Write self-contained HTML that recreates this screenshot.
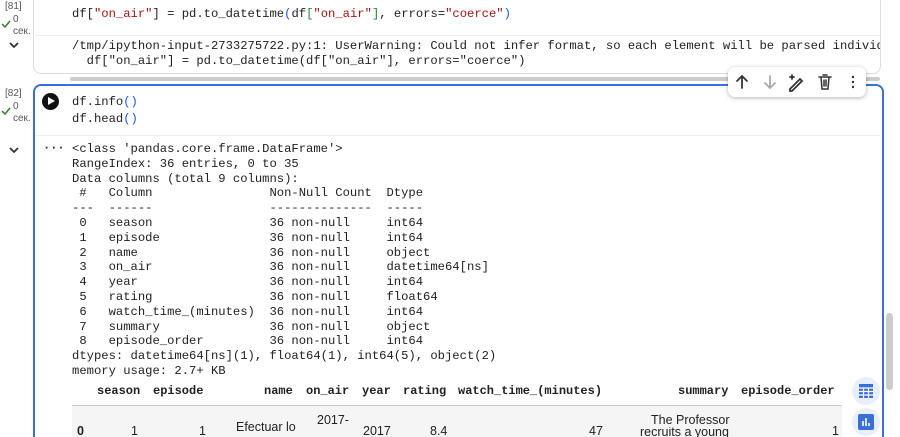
<!DOCTYPE html>
<html><head><style>
html,body{margin:0;width:900px;height:437px;overflow:hidden}
body{background:#fff;font-family:"Liberation Mono",monospace;position:relative;color:#212121}
.a{position:absolute}
.mono{font-family:"Liberation Mono",monospace;font-size:12.2px;white-space:pre}
.sm{font-family:"Liberation Sans",sans-serif;font-size:10px;color:#555}
.s{color:#a31515}.b{color:#1a56db}.g{color:#22863a}
.h{position:absolute;top:384px;font-family:"Liberation Mono",monospace;font-weight:bold;font-size:12px;white-space:pre}
.c{position:absolute;font-family:"Liberation Sans",sans-serif;font-size:12.5px;white-space:nowrap;color:#222}
</style></head><body>
<div class="a" style="left:33px;top:0;width:846px;height:73px;border:1px solid #ddd;border-top:none;border-radius:0 0 8px 8px"></div>
<div class="a" style="left:33px;top:35px;width:847px;border-top:1px solid #eee"></div>
<div class="a" style="left:70px;top:77px;width:810px;height:4px;background:#ccc;border-radius:2px"></div>
<div class="a sm" style="left:5px;top:1px">[81]</div>
<div class="a sm" style="left:13px;top:14px">0</div>
<svg class="a" style="left:1px;top:19px" width="10" height="10"><path d="M1 5l3 3 5-6" stroke="#2e7d32" stroke-width="1.5" fill="none"/></svg>
<div class="a sm" style="left:13px;top:26px">сек.</div>
<svg class="a" style="left:8px;top:41px" width="12" height="8"><path d="M2 2l4 4 4-4" stroke="#333" stroke-width="1.8" fill="none"/></svg>
<div class="a mono" style="left:72px;top:7px">df[<span class="s">"on_air"</span>] = pd.to_datetime<span class="b">(</span>df<span class="g">[</span><span class="s">"on_air"</span><span class="g">]</span>, errors=<span class="s">"coerce"</span><span class="b">)</span></div>
<div class="a" style="left:72px;top:39px;width:808px;height:32px;overflow:hidden"><div class="mono" style="line-height:14.8px">/tmp/ipython-input-2733275722.py:1: UserWarning: Could not infer format, so each element will be parsed individ
  df["on_air"] = pd.to_datetime(df["on_air"], errors="coerce")</div></div>

<div class="a" style="left:33px;top:84px;width:847px;height:351px;border:2px solid #3b6fd8;border-bottom:none;border-radius:8px 8px 0 0"></div>
<div class="a" style="left:35px;top:135px;width:845px;border-top:1px solid #eee"></div>
<div class="a sm" style="left:5px;top:88px">[82]</div>
<div class="a sm" style="left:13px;top:101px">0</div>
<svg class="a" style="left:1px;top:106px" width="10" height="10"><path d="M1 5l3 3 5-6" stroke="#2e7d32" stroke-width="1.5" fill="none"/></svg>
<div class="a sm" style="left:13px;top:113px">сек.</div>
<svg class="a" style="left:8px;top:146px" width="12" height="8"><path d="M2 2l4 4 4-4" stroke="#333" stroke-width="1.8" fill="none"/></svg>
<div class="a" style="left:42px;top:93px;width:17px;height:17px;border-radius:50%;background:#111"></div>
<div class="a" style="left:48px;top:97px;width:0;height:0;border-left:7px solid #fff;border-top:4.5px solid transparent;border-bottom:4.5px solid transparent"></div>
<div class="a mono" style="left:72px;top:94px;line-height:17px">df.info<span class="b">()</span>
df.head<span class="b">()</span></div>
<div class="a" style="left:43px;top:141px;font-size:12px;font-weight:bold">···</div>
<div class="a mono" style="left:72px;top:142px;line-height:14.8px">&lt;class 'pandas.core.frame.DataFrame'&gt;
RangeIndex: 36 entries, 0 to 35
Data columns (total 9 columns):
 #   Column                Non-Null Count  Dtype         
---  ------                --------------  -----         
 0   season                36 non-null     int64         
 1   episode               36 non-null     int64         
 2   name                  36 non-null     object        
 3   on_air                36 non-null     datetime64[ns]
 4   year                  36 non-null     int64         
 5   rating                36 non-null     float64       
 6   watch_time_(minutes)  36 non-null     int64         
 7   summary               36 non-null     object        
 8   episode_order         36 non-null     int64         
dtypes: datetime64[ns](1), float64(1), int64(5), object(2)
memory usage: 2.7+ KB</div>

<div class="a" style="left:728px;top:67px;width:138px;height:30px;background:#fff;border-radius:7px;box-shadow:0 1px 4px rgba(0,0,0,.3)"></div>
<svg class="a" style="left:728px;top:67px" width="138" height="30" fill="none" stroke-width="1.8" stroke-linecap="round">
<path d="M14 21V9M9 14l5-5 5 5" stroke="#333"/>
<path d="M42 9v12M37 16l5 5 5-5" stroke="#aaa"/>
<path d="M62 22l10-10 2 2-10 10h-2z" stroke="#333"/><path d="M64 8v4M62 10h4" stroke="#333"/>
<path d="M91 10h12M93 10l1 12h6l1-12M95 8h4M96 13v6M98 13v6" stroke="#333" stroke-width="1.5"/>
<circle cx="125" cy="10" r="1.2" fill="#333" stroke="none"/><circle cx="125" cy="15" r="1.2" fill="#333" stroke="none"/><circle cx="125" cy="20" r="1.2" fill="#333" stroke="none"/>
</svg>

<span class="h" style="left:97px">season</span>
<span class="h" style="left:153px">episode</span>
<span class="h" style="left:264px">name</span>
<span class="h" style="left:306px">on_air</span>
<span class="h" style="left:362px">year</span>
<span class="h" style="left:403px">rating</span>
<span class="h" style="left:458px">watch_time_(minutes)</span>
<span class="h" style="left:678px">summary</span>
<span class="h" style="left:741px">episode_order</span>
<div class="a" style="left:72px;top:405px;width:770px;height:32px;background:#f5f5f5;border-top:1px solid #ccc"></div>
<span class="c" style="left:77px;top:426px;font-weight:bold;line-height:11px;height:11px;overflow:hidden">0</span>
<span class="c" style="left:131px;top:426px;line-height:11px;height:11px;overflow:hidden">1</span>
<span class="c" style="left:199px;top:426px;line-height:11px;height:11px;overflow:hidden">1</span>
<span class="c" style="left:236px;top:420px;line-height:15px">Efectuar lo</span>
<span class="c" style="left:317px;top:413px;line-height:15px">2017-</span>
<span class="c" style="left:363px;top:426px;line-height:11px;height:11px;overflow:hidden">2017</span>
<span class="c" style="left:430px;top:426px;line-height:11px;height:11px;overflow:hidden">8.4</span>
<span class="c" style="left:589px;top:426px;line-height:11px;height:11px;overflow:hidden">47</span>
<span class="c" style="left:651px;top:413px;line-height:15px">The Professor</span>
<span class="c" style="left:640px;top:427px;line-height:10px;height:10px;overflow:hidden">recruits a young</span>
<span class="c" style="left:832px;top:426px;line-height:11px;height:11px;overflow:hidden">1</span>

<div class="a" style="left:886px;top:313px;width:7px;height:77px;background:#ccc;border-radius:4px"></div>
<div class="a" style="left:852px;top:377px;width:28px;height:28px;border-radius:50%;background:#e8eefa"></div>
<svg class="a" style="left:858px;top:383px" width="16" height="16"><rect x="1" y="1" width="14" height="14" fill="#3b6fd8"/><path d="M1 5h14M1 8.5h14M1 12h14M5.5 5v10M10.5 5v10" stroke="#fff" stroke-width="1.2"/></svg>
<div class="a" style="left:852px;top:408px;width:28px;height:28px;border-radius:50%;background:#e8eefa"></div>
<svg class="a" style="left:858px;top:414px" width="16" height="16"><rect x="0" y="0" width="16" height="16" rx="2" fill="#3b6fd8"/><path d="M5 12V7M8 12V4M11 12V9" stroke="#fff" stroke-width="1.6"/></svg>
</body></html>
